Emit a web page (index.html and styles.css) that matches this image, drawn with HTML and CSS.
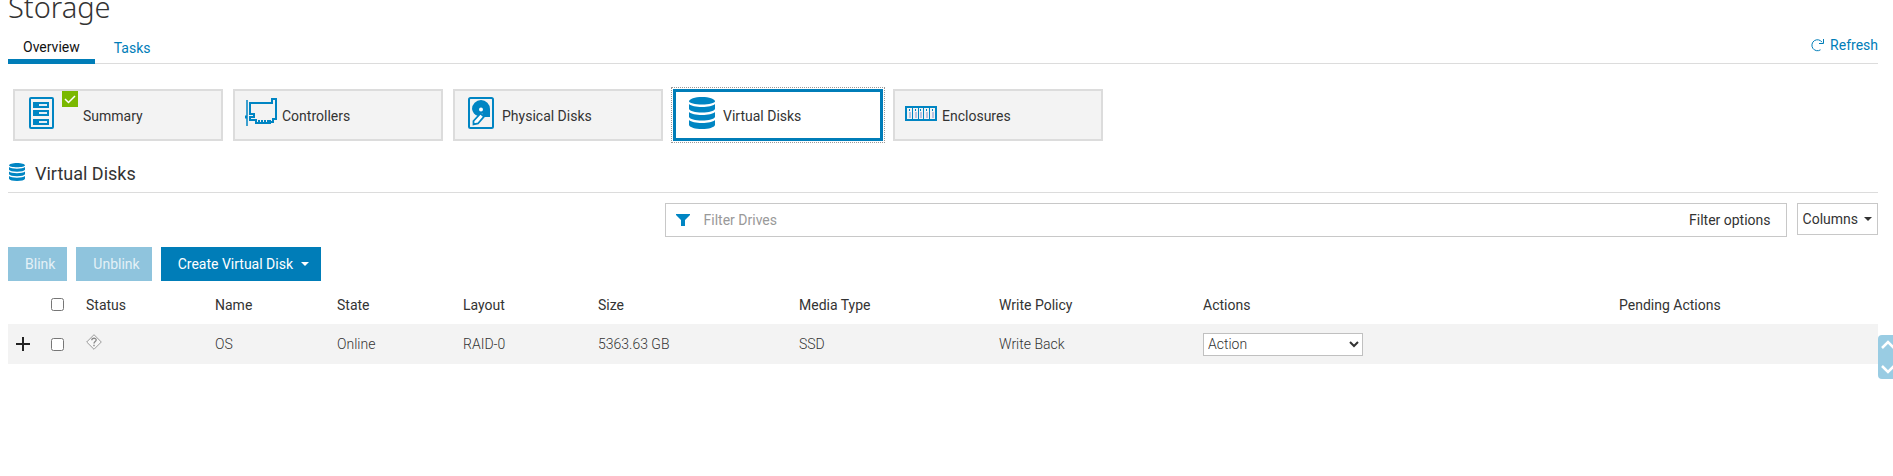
FILE: index.html
```
<!DOCTYPE html>
<html lang="en">
<head>
<meta charset="utf-8">
<title>Storage</title>
<link rel="stylesheet" href="styles.css">
</head>
<body>
<svg class="defs" aria-hidden="true">
  <symbol id="disks" viewBox="0 0 26 32">
    <path d="M0 4.500C0 2 6 0 13 0s13 2 13 4.500C26 6 20 7.500 13 7.500S0 6 0 4.500z"/>
    <path d="M0 7c2 2 7 3 13 3s11-1 13-3v5c-1 2-6 3.500-13 3.500S1 14 0 12z"/>
    <path d="M0 15c2 2 7 3 13 3s11-1 13-3v5c-1 2-6 3.500-13 3.500S1 22 0 20z"/>
    <path d="M0 23c2 2 7 3 13 3s11-1 13-3v5c-1 2.500-6 4-13 4S1 30.500 0 28z"/>
  </symbol>
</svg>
<main class="page">
  <h1 class="title">Storage</h1>
  <div class="tabbar">
    <nav class="tabs">
      <a class="tab tab-active" href="#overview">Overview</a>
      <a class="tab" href="#tasks">Tasks</a>
    </nav>
    <a class="refresh" href="#refresh">
      <svg width="14" height="14" viewBox="0 0 14 14" fill="none" stroke="currentColor"><path d="M9.500 11.800A5.500 5.500 0 1 1 11 4.200"/><path d="M12.500 1v4.500H8" /></svg>
      Refresh
    </a>
  </div>

  <div class="cards">
    <button class="card" type="button">
      <svg class="card-icon summary-icon" width="26" height="32" viewBox="0 0 26 32" fill="none" stroke="#0085c3" stroke-width="2"><rect x="2" y="1" width="23" height="30" rx="1"/><path fill="#0085c3" stroke="none" d="M5 5h16v6H5zM5 13h16v6H5zM5 22h16v6H5z"/><path fill="#e3eef6" stroke="none" d="M11 7h8v2h-8zM11 15h8v2h-8zM11 24h8v2h-8z"/></svg>
      <svg class="ok-badge" width="16" height="16" viewBox="0 0 16 16"><path fill="#7ab800" d="M0 0h16v16H0z"/><path d="M3 8l3.500 3.500L13 5" fill="none" stroke="#fff" stroke-width="1.500"/></svg>
      <span class="card-label after-badge">Summary</span>
    </button>
    <button class="card card-controllers" type="button">
      <svg class="card-icon" width="32" height="30" viewBox="0 0 32 30" fill="none" stroke="#0085c3" stroke-width="2"><path d="M2 2v26" stroke-width="1.500"/><path d="M0 19h2" stroke-width="3"/><path d="M5 14V5h22V1h4v20h-3v3h-3M5 4v12h4v3H5v3h6v3h14v-3M14 25v-3M17 25v-3M20 25v-3M23 25v-3"/></svg>
      <span class="card-label">Controllers</span>
    </button>
    <button class="card" type="button">
      <svg class="card-icon" width="26" height="32" viewBox="0 0 26 32"><rect x="1" y="1" width="24" height="30" rx="1.500" fill="none" stroke="#0085c3" stroke-width="2"/><path d="M4 12a9 9 0 0 1 18 0v8h-6l-2-4-4 3a9 9 0 0 1-6-7z" fill="#0085c3"/><circle cx="13" cy="12.500" r="2" fill="#fff"/><path d="M12.500 16.500l3.500 3-6 7-4.500 1v-3.500z" fill="#fff" stroke="#0085c3" stroke-width="1.800"/></svg>
      <span class="card-label">Physical Disks</span>
    </button>
    <button class="card card-selected" type="button">
      <svg class="card-icon" width="26" height="32" fill="#0085c3"><use href="#disks"/></svg>
      <span class="card-label">Virtual Disks</span>
    </button>
    <button class="card card-enclosures" type="button">
      <svg class="card-icon" width="32" height="15" viewBox="0 0 32 15"><path d="M0 0h32v15H0z" fill="#0085c3"/><path d="M2 2h5v11H2zM8 2h5v11H8zM14 2h4v11h-4zM19 2h5v11h-5zM25 2h5v11h-5z" fill="#f3f3f3"/><path d="M4 6h2v6H4zM10 6h2v6h-2zM15 6h2v6h-2zM21 6h2v6h-2zM27 6h2v6h-2z" fill="#bcc3e0"/><path d="M4 3h1v2H4zM10 3h1v2h-1zM15 3h1v2h-1zM21 3h1v2h-1zM27 3h1v2h-1z" fill="#0085c3"/></svg>
      <span class="card-label">Enclosures</span>
    </button>
  </div>

  <h2 class="section">
    <svg class="section-icon" width="16" height="18" viewBox="0 0 26 32" preserveAspectRatio="none" fill="#0085c3"><use href="#disks" width="26" height="32"/></svg>
    Virtual Disks
  </h2>

  <div class="filters">
    <div class="filter">
      <svg width="14" height="12" viewBox="0 0 14 12" fill="#0085c3"><path d="M0 0h14v1L9 6v6H5V6L0 1z"/></svg>
      <input class="filter-input" type="text" placeholder="Filter Drives" aria-label="Filter Drives">
      <button class="filter-options" type="button">Filter options</button>
    </div>
    <button class="columns" type="button">Columns <span class="caret"></span></button>
  </div>

  <div class="toolbar">
    <button class="btn" type="button" disabled>Blink</button>
    <button class="btn" type="button" disabled>Unblink</button>
    <button class="btn btn-create" type="button">Create Virtual Disk <span class="caret"></span></button>
  </div>

  <table class="grid">
    <colgroup>
      <col class="c-expand"><col class="c-check"><col class="c-status"><col class="c-name"><col class="c-state"><col class="c-layout"><col class="c-size"><col class="c-media"><col class="c-write"><col class="c-actions"><col class="c-pending">
    </colgroup>
    <thead>
      <tr><th></th><th><input class="check" type="checkbox" aria-label="Select all disks"></th><th>Status</th><th>Name</th><th>State</th><th>Layout</th><th>Size</th><th>Media Type</th><th>Write Policy</th><th>Actions</th><th>Pending Actions</th></tr>
    </thead>
    <tbody>
      <tr>
        <td><button class="expand" type="button" aria-label="Expand OS"><svg width="14" height="14" viewBox="0 0 14 14" stroke="#222" stroke-width="2"><path d="M7 0v14M0 7h14"/></svg></button></td>
        <td><input class="check" type="checkbox" aria-label="Select OS"></td>
        <td><svg class="unknown" width="16" height="16" viewBox="0 0 16 16" fill="none" stroke="#888"><path d="M8 .7L15.300 8 8 15.300.7 8z" fill="#f8f8f8" stroke="#999"/><path d="M5.800 6.200c0-2.600 4.600-2.500 4.400-.2C10 7.500 8 7.500 8 9.500" stroke-width="1.300"/><path d="M8 10.800v1.500" stroke-width="1.400"/></svg></td>
        <td>OS</td><td>Online</td><td>RAID-0</td><td>5363.63 GB</td><td>SSD</td><td>Write Back</td>
        <td><select class="action" aria-label="Action for OS"><option>Action</option></select></td>
        <td></td>
      </tr>
    </tbody>
  </table>
</main>
<button class="scroller" type="button" aria-label="Scroll page">
  <svg width="14" height="34" viewBox="0 0 14 34" fill="none" stroke="#fff" stroke-width="2.500"><path d="M1 8l6-6 6 6M1 26l6 6 6-6"/></svg>
</button>
</body>
</html>
```
FILE: styles.css
```
* { box-sizing: border-box; }
body {
  margin: 0;
  background: #fff;
  color: #333;
  font: 14px/20px Roboto, sans-serif;
}
button, input, select { font: inherit; color: inherit; margin: 0; }
button { cursor: pointer; }
a { color: #007db8; text-decoration: none; }
svg { flex: none; display: block; }
.defs { position: absolute; width: 0; height: 0; }
.page { padding: 0 15px 0 8px; }

.title {
  margin: 0;
  height: 28px;
  font: 300 29px/14px "Noto Sans", sans-serif;
}

.tabbar {
  display: flex;
  justify-content: space-between;
  align-items: flex-start;
  height: 36px;
  border-bottom: 1px solid #dcdcdc;
}
.tabs { display: flex; }
.tab { height: 36px; padding: 10px 15px 0; }
.tab + .tab { margin-left: 4px; }
.tab-active {
  color: #111;
  border-bottom: 5px solid #007db8;
  padding-top: 9px;
}
.refresh { display: flex; align-items: center; gap: 5px; padding-top: 7px; }

.cards { display: flex; gap: 10px; padding: 25px 5px 0; }
.card {
  display: flex;
  align-items: center;
  gap: 8px;
  width: 210px;
  height: 52px;
  padding: 0 13px;
  border: 2px solid #dcdcdc;
  background: #f3f3f3;
}
.card-icon { margin-bottom: 4px; }
.card-label { padding-top: 1px; }
.card-controllers { padding: 0 10px; gap: 5px; }
.card-enclosures { padding: 0 10px; gap: 5px; }
.card-selected {
  border: 3px solid #007db8;
  background: #fff;
  outline: 1px dotted #999;
  outline-offset: 1px;
}
.card-selected .card-label { padding-top: 2px; }
.ok-badge { align-self: flex-start; }
.after-badge { margin-left: -3px; }

.section {
  display: flex;
  align-items: center;
  gap: 10px;
  margin: 20px 0 0;
  padding: 0 0 6px 1px;
  border-bottom: 1px solid #dcdcdc;
  font-size: 18px;
  font-weight: 400;
  line-height: 25px;
}
.section-icon { margin-bottom: 3px; }

.filters { display: flex; align-items: flex-start; gap: 10px; margin-top: 10px; }
.filter {
  display: flex;
  align-items: center;
  flex: 0 0 60%;
  height: 34px;
  margin-left: auto;
  padding: 0 15px 0 10px;
  border: 1px solid #c8c8c8;
}
.filter-input {
  flex: 1;
  min-width: 0;
  margin-left: 14px;
  padding: 0;
  border: 0;
  background: none;
}
.filter-input::placeholder { color: #999; }
.filter-options { padding: 0; border: 0; background: none; }
.columns {
  display: flex;
  align-items: center;
  gap: 6px;
  height: 32px;
  padding: 0 5px;
  border: 1px solid #c8c8c8;
  background: #fff;
}
.caret {
  border: 4px solid transparent;
  border-top-color: currentColor;
  border-bottom: 0;
}

.toolbar { display: flex; gap: 9px; margin-top: 10px; }
.btn {
  display: flex;
  align-items: center;
  gap: 8px;
  height: 34px;
  padding: 0 12px 0 17px;
  border: 0;
  background: #007db8;
  color: #fff;
}
.btn:disabled { background: #8fc4dd; color: #e4f1f7; cursor: default; }

.grid { width: 100%; table-layout: fixed; border-collapse: collapse; }
.grid th, .grid td { padding: 0; text-align: left; vertical-align: middle; white-space: nowrap; }
.grid th { height: 43px; padding-top: 4px; font-weight: 400; }
.grid td { height: 40px; font-weight: 300; }
.grid tbody tr { background: #f3f3f3; }
.c-expand { width: 43px; }
.c-check { width: 35px; }
.c-status { width: 129px; }
.c-name { width: 122px; }
.c-state { width: 126px; }
.c-layout { width: 135px; }
.c-size { width: 201px; }
.c-media { width: 200px; }
.c-write { width: 204px; }
.c-actions { width: 416px; }
.c-pending { width: 259px; }
.check { display: block; width: 13px; height: 13px; }
.expand { display: block; margin-left: 8px; padding: 0; border: 0; background: none; }
.unknown { margin-bottom: 4px; }
.action {
  display: block;
  width: 160px;
  height: 23px;
  padding: 0;
  border: 1px solid #c0c0c0;
  border-radius: 0;
  background-color: #fff;
}

.scroller {
  position: fixed;
  top: 335px;
  right: -5px;
  width: 20px;
  height: 44px;
  padding: 0 3px;
  border: 0;
  border-radius: 4px;
  background: #99cce3;
}
```
